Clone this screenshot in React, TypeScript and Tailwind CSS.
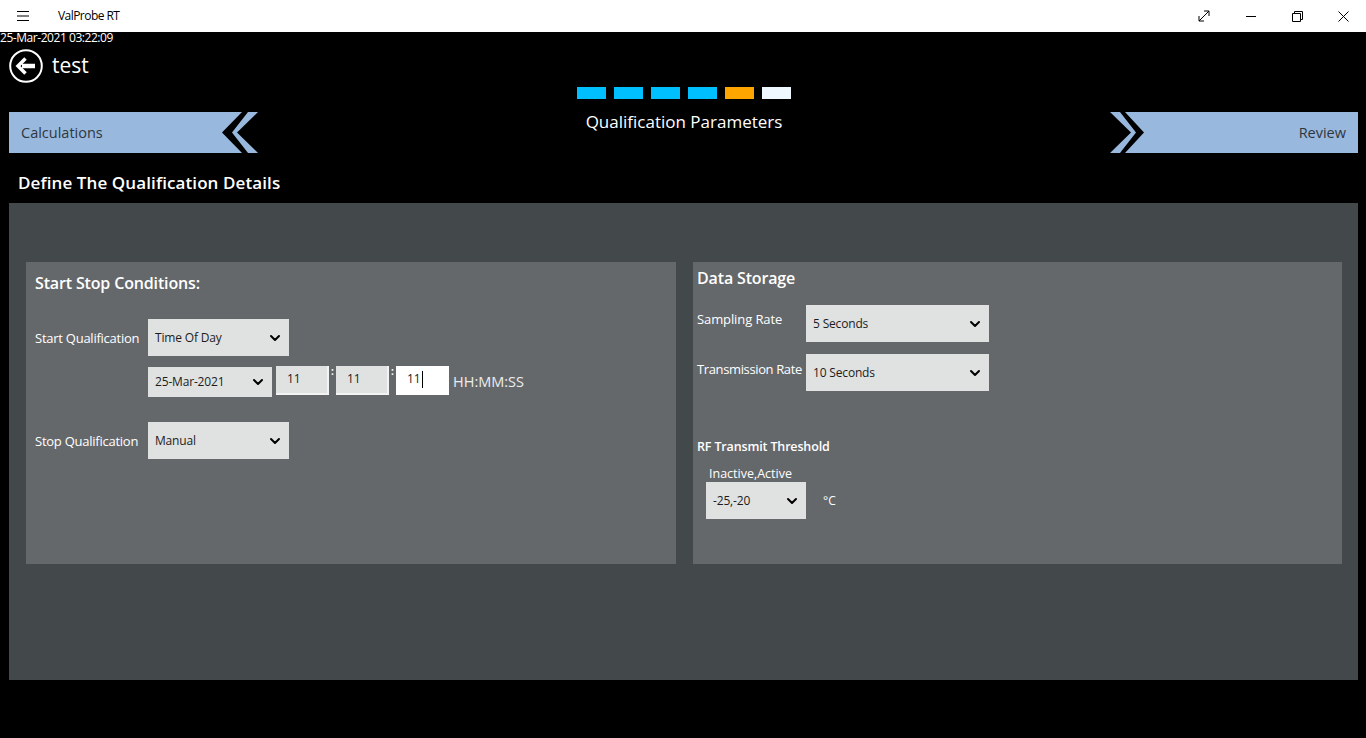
import React from 'react';
import { ChevronDown } from 'lucide-react';

const font = { fontFamily: '"Open Sans", "Noto Sans", sans-serif' };

const Select = ({ value, className }: { value: string; className: string }) => (
  <div className={`flex items-center justify-between bg-[#e0e2e1] pl-[7px] pr-[6px] text-[12px] tracking-[-0.17px] text-[#1c1c1c] ${className}`}>
    <span>{value}</span>
    <ChevronDown size={16} strokeWidth={3} className="text-black" />
  </div>
);

const TimeBox = ({ active }: { active?: boolean }) => (
  <div
    className={
      active
        ? 'flex h-[29px] w-[53px] items-center bg-white pb-[3px] pl-[11px] text-[12px] text-[#1c1c1c]'
        : 'flex h-[29px] w-[53px] items-center border-r-2 border-b-2 border-[#f2f3f2] bg-[#e0e2e1] pb-px pl-[11px] text-[12px] text-[#1c1c1c]'
    }
  >
    11
    {active && <span className="ml-px h-[17px] w-px bg-black" />}
  </div>
);

const Colon = () => <span className="mx-px w-[5px] self-start text-center text-[10px] leading-[11px] font-bold text-white">:</span>;

const App = () => {
  return (
    <div style={font} className="h-[738px] w-full overflow-hidden bg-black text-white">
      {/* title bar */}
      <div className="flex h-8 items-center bg-white text-black">
        <svg width="12" height="10" viewBox="0 0 12 10" className="ml-[17px]">
          <path d="M0 .5h12M0 5h12M0 9.5h12" stroke="#000" strokeWidth="1" />
        </svg>
        <span className="ml-[29px] text-[12px] tracking-[-0.55px]">ValProbe RT</span>
        <div className="ml-auto flex items-center">
          <svg width="12" height="12" viewBox="0 0 12 12" fill="none" stroke="#000" className="mr-[35px]">
            <path d="M1 11 11 1M6 1h5v5M1 6v5h5" />
          </svg>
          <svg width="12" height="12" viewBox="0 0 12 12" fill="none" stroke="#000" className="mr-[35px]">
            <path d="M1 6.5h10" />
          </svg>
          <svg width="11" height="11" viewBox="0 0 11 11" fill="none" stroke="#000" className="mr-[35px]">
            <path d="M.5 2.5h8v8h-8zM2.5 2.5v-2h8v8h-2" />
          </svg>
          <svg width="11" height="11" viewBox="0 0 11 11" fill="none" stroke="#000" className="mr-[17px]">
            <path d="M.5.5l10 10M10.5.5l-10 10" />
          </svg>
        </div>
      </div>

      <div className="h-[12px] whitespace-nowrap text-[12px] leading-[12px] tracking-[-0.45px]">25-Mar-2021 03:22:09</div>

      {/* page header */}
      <div className="mt-[5px] ml-[9px] flex h-[34px] items-center">
        <svg width="34" height="34" viewBox="0 0 34 34" fill="none">
          <circle cx="17" cy="17" r="15.8" stroke="#fff" strokeWidth="2" />
          <path d="M26 17H13" stroke="#fff" strokeWidth="4.5" />
          <path d="M16.5 9.5 9 17l7.5 7.5" stroke="#fff" strokeWidth="3.5" />
        </svg>
        <span className="ml-[9px] pb-[2px] text-[21px] leading-none">test</span>
      </div>

      {/* step indicators */}
      <div className="mt-1 ml-[577px] flex h-3 gap-2">
        <div className="w-[29px] bg-[#00bfff]" />
        <div className="w-[29px] bg-[#00bfff]" />
        <div className="w-[29px] bg-[#00bfff]" />
        <div className="w-[29px] bg-[#00bfff]" />
        <div className="w-[29px] bg-[#ffa500]" />
        <div className="w-[29px] bg-[#f0f8ff]" />
      </div>

      {/* wizard nav */}
      <div className="mt-[13px] flex h-[41px] justify-between px-2 pl-[9px]">
        <div className="flex">
          <div className="flex w-[213px] items-center bg-[#99b8dd] pl-3 text-[14.5px] font-medium text-[#2e3740]">Calculations</div>
          <svg width="36" height="41" viewBox="0 0 36 41">
            <path d="M0 0h20L0 20.5 20 41H0z" fill="#99b8dd" />
            <path d="M26 0h10L15 20.5 36 41H26L10 20.5z" fill="#99b8dd" />
          </svg>
        </div>
        <div className="-mt-[3px] text-[17px] leading-[26px]">Qualification Parameters</div>
        <div className="flex">
          <svg width="35" height="41" viewBox="0 0 35 41">
            <path d="M34 20.5 15 0h20v41H15z" fill="#99b8dd" />
            <path d="M0 0h10l16 20.5L10 41H0l21-20.5z" fill="#99b8dd" />
          </svg>
          <div className="flex w-[213px] items-center justify-end bg-[#99b8dd] pr-3 text-[14.5px] font-medium text-[#2e3740]">Review</div>
        </div>
      </div>

      <div className="mt-[17px] ml-[18px] text-[17px] leading-[26px] font-semibold tracking-[0.1px]">Define The Qualification Details</div>

      {/* main panel */}
      <div className="mt-[7px] ml-[9px] flex h-[477px] w-[1349px] gap-[17px] bg-[#43484b] pt-[59px] pl-[17px]">
        <div className="h-[302px] w-[650px] bg-[#65686b] pt-[9px] pl-[9px]">
          <div className="h-6 text-[16px] leading-6 font-semibold tracking-[-0.15px]">Start Stop Conditions:</div>
          <div className="mt-6 flex items-center">
            <span className="w-[113px] pt-[2px] text-[13px] tracking-[-0.25px]">Start Qualification</span>
            <Select value="Time Of Day" className="h-[37px] w-[141px]" />
          </div>
          <div className="mt-[10px] ml-[113px] flex items-start">
            <Select value="25-Mar-2021" className="mt-px h-[30px] w-[124px]" />
            <div className="ml-1 flex">
              <TimeBox />
              <Colon />
              <TimeBox />
              <Colon />
              <TimeBox active />
            </div>
            <span className="mt-[6px] ml-1 text-[14.5px] leading-5 text-[#eceded]">HH:MM:SS</span>
          </div>
          <div className="mt-[25px] flex items-center">
            <span className="w-[113px] pt-[2px] text-[13px] tracking-[-0.25px]">Stop Qualification</span>
            <Select value="Manual" className="h-[37px] w-[141px]" />
          </div>
        </div>

        <div className="h-[302px] w-[649px] bg-[#65686b] pt-1 pl-1">
          <div className="h-6 text-[16px] leading-6 font-semibold tracking-[-0.15px]">Data Storage</div>
          <div className="mt-[15px] flex items-start">
            <span className="mt-[5px] w-[109px] text-[13px] leading-[18px] tracking-[-0.1px] whitespace-nowrap">Sampling Rate</span>
            <Select value="5 Seconds" className="h-[37px] w-[183px]" />
          </div>
          <div className="mt-3 flex items-start">
            <span className="mt-[6px] w-[109px] text-[13px] leading-[18px] tracking-[-0.37px] whitespace-nowrap">Transmission Rate</span>
            <Select value="10 Seconds" className="h-[37px] w-[183px]" />
          </div>
          <div className="mt-[47px] text-[12.5px] leading-[18px] font-semibold tracking-[-0.15px]">RF Transmit Threshold</div>
          <div className="mt-[9px] ml-3 text-[12.5px] leading-[17px]">Inactive,Active</div>
          <div className="ml-[9px] flex items-center">
            <Select value="-25,-20" className="h-[37px] w-[100px]" />
            <span className="ml-[17px] text-[12px]">°C</span>
          </div>
        </div>
      </div>
    </div>
  );
};

export default App;
